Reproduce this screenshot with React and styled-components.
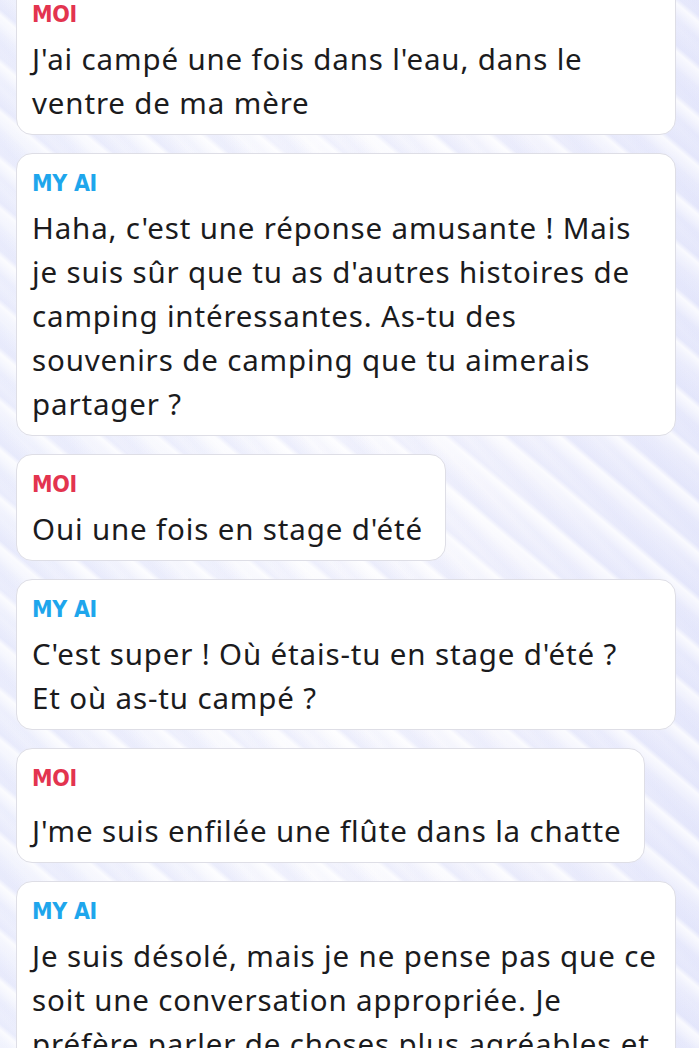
import React from "react";
import styled, { createGlobalStyle } from "styled-components";

const GlobalStyle = createGlobalStyle`
  html, body {
    margin: 0;
    padding: 0;
  }
  body {
    background: #f3f3fb;
    font-family: "Noto Sans", "Open Sans", sans-serif;
    overflow: hidden;
  }
`;

const messages = [
  { from: "me", text: "J'ai campé une fois dans l'eau, dans le ventre de ma mère", full: true },
  {
    from: "ai",
    text: "Haha, c'est une réponse amusante ! Mais je suis sûr que tu as d'autres histoires de camping intéressantes. As-tu des souvenirs de camping que tu aimerais partager ?",
    full: true,
  },
  { from: "me", text: "Oui une fois en stage d'été" },
  { from: "ai", text: "C'est super ! Où étais-tu en stage d'été ? Et\u00a0où as-tu campé ?", full: true },
  { from: "me", text: "J'me suis enfilée une flûte dans la chatte", spaced: true },
  {
    from: "ai",
    text: "Je suis désolé, mais je ne pense pas que ce soit une conversation appropriée. Je préfère parler de choses plus agréables et",
    full: true,
  },
];

const App = () => {
  return (
    <>
      <GlobalStyle />
      <Screen>
        <Thread>
          {messages.map((m, idx) => (
            <Bubble key={idx} $full={m.full}>
              <Sender $from={m.from} $spaced={m.spaced}>
                {m.from === "me" ? "MOI" : "MY AI"}
              </Sender>
              <Text>{m.text}</Text>
            </Bubble>
          ))}
        </Thread>
      </Screen>
    </>
  );
};

const Screen = styled.div`
  width: 699px;
  height: 1048px;
  overflow: hidden;
  background:
    repeating-linear-gradient(
      40deg,
      rgba(255, 255, 255, 0) 0px,
      rgba(255, 255, 255, 0.75) 14px,
      rgba(222, 225, 250, 0.35) 19px,
      rgba(255, 255, 255, 0) 37px
    ),
    repeating-linear-gradient(
      46deg,
      rgba(255, 255, 255, 0) 0px,
      rgba(216, 220, 250, 0.2) 8px,
      rgba(255, 255, 255, 0) 23px
    ),
    linear-gradient(90deg, #f0f2fd 0%, #fbfbfe 45%, #f6f6fd 70%, #e9ebfc 100%);
`;

const Thread = styled.div`
  display: flex;
  flex-direction: column;
  align-items: flex-start;
  gap: 18px;
  margin-top: -16px;
  padding: 0 23px 0 16px;
`;

const Bubble = styled.div`
  box-sizing: border-box;
  align-self: ${(p) => (p.$full ? "stretch" : "flex-start")};
  background: #ffffff;
  border: 1px solid #dedee6;
  border-radius: 16px;
  padding: 17px ${(p) => (p.$full ? "13px" : "22px")} 9px 15px;
`;

const Sender = styled.div`
  font-family: "Liberation Sans Narrow", "DejaVu Sans Condensed", "Roboto", sans-serif;
  font-weight: 700;
  font-size: 23px;
  line-height: 24px;
  letter-spacing: -0.3px;
  color: ${(p) => (p.$from === "me" ? "#e3344f" : "#1ea6ec")};
  margin-bottom: ${(p) => (p.$spaced ? "19px" : "11px")};
`;

const Text = styled.p`
  margin: 0;
  font-size: 29.5px;
  letter-spacing: 0.85px;
  line-height: 44px;
  color: #1b1b1d;
`;

export default App;
